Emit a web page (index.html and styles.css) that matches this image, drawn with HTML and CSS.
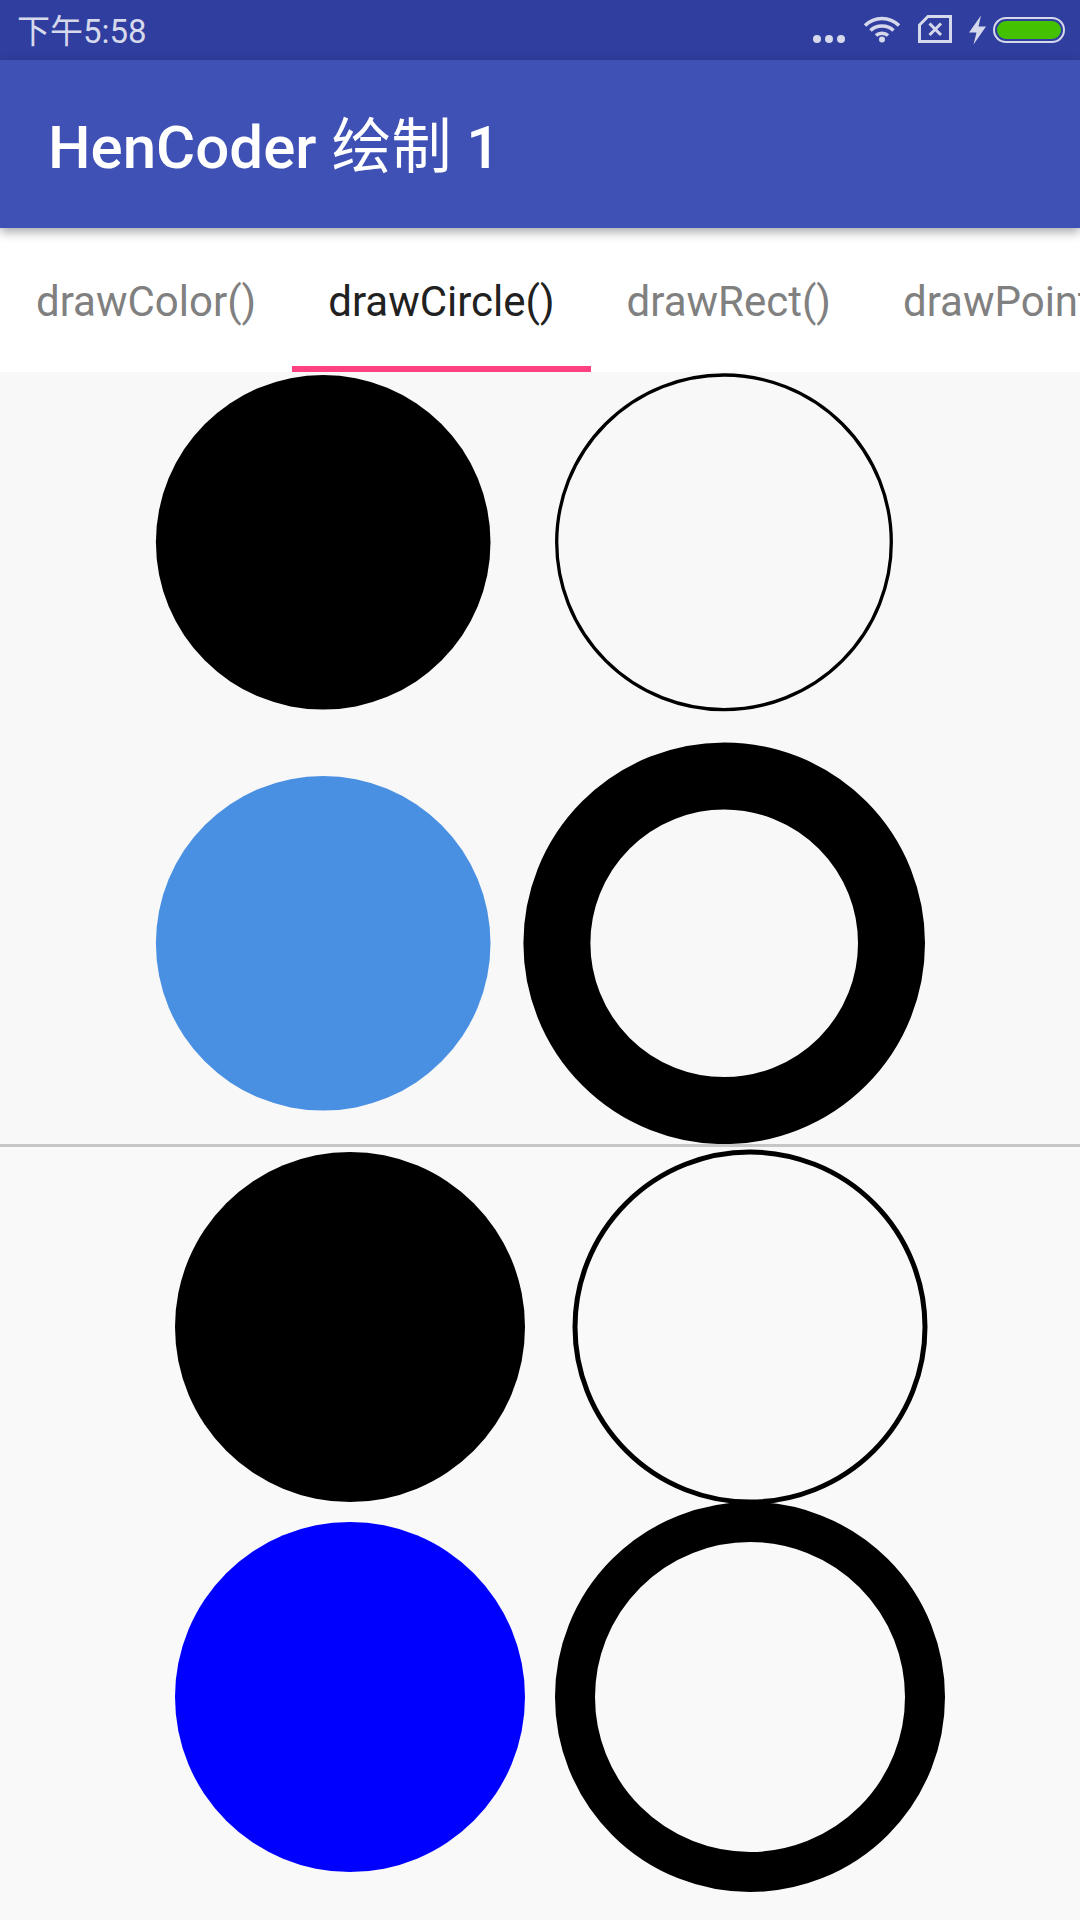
FILE: index.html
```html
<!DOCTYPE html>
<html>
<head>
<meta http-equiv="Content-Type" content="text/html; charset=utf-8"/>
<title>HenCoder 绘制 1</title>
<link rel="stylesheet" href="styles.css">
</head>
<body>

<div class="status-bar">
  <span class="status-time">下午5:58</span>
  <div class="status-icons">
    <svg class="icon-dots" width="32" height="8" viewBox="0 0 32 8">
      <circle cx="4" cy="4" r="4"/><circle cx="16" cy="4" r="4"/><circle cx="28" cy="4" r="4"/>
    </svg>
    <svg class="icon-wifi" width="38" height="28" viewBox="0 0 38 28">
      <path d="M2 10.500C11.500 1 26.500 1 36 10.500"/>
      <path d="M7.500 15.500C13.500 9.500 24.500 9.500 30.500 15.500"/>
      <path d="M13 20.500C16 17.500 22 17.500 25 20.500"/>
      <circle cx="19" cy="24.500" r="3"/>
    </svg>
    <svg class="icon-sim" width="34" height="28" viewBox="0 0 34 28">
      <path d="M10 1.500H32.500V26.500H1.500V10Z"/>
      <path d="M11.500 8.500L23 20M23 8.500L11.500 20"/>
    </svg>
    <svg class="icon-bolt" width="17" height="30" viewBox="0 0 17 30">
      <polygon points="12,0.500 0,17.500 7.500,17.500 4.500,29.500 17,11.500 9.500,11.500"/>
    </svg>
    <div class="battery"><div class="battery-level"></div></div>
  </div>
</div>

<div class="app-bar">
  <h1 class="app-title">HenCoder <span class="app-title-cjk">绘制</span> 1</h1>
</div>

<div class="tabs">
  <div class="tab">drawColor()</div>
  <div class="tab tab-active">drawCircle()</div>
  <div class="tab">drawRect()</div>
  <div class="tab">drawPoint()</div>
</div>

<svg class="canvas canvas-top" width="1080" height="772" viewBox="0 0 1080 772">
  <circle cx="323.200" cy="170.300" r="167.300" fill="#000"/>
  <circle cx="724" cy="170.300" r="167.300" fill="none" stroke="#000" stroke-width="3.300"/>
  <circle cx="323.200" cy="571.300" r="167.300" fill="#4a90e2"/>
  <circle cx="724.200" cy="571.300" r="167.300" fill="none" stroke="#000" stroke-width="67"/>
</svg>

<div class="divider"></div>

<svg class="canvas canvas-bottom" width="1080" height="773" viewBox="0 0 1080 773">
  <circle cx="350" cy="180" r="175" fill="#000"/>
  <circle cx="750" cy="180" r="175" fill="none" stroke="#000" stroke-width="5"/>
  <circle cx="350" cy="550" r="175" fill="#00f"/>
  <circle cx="750" cy="550" r="175" fill="none" stroke="#000" stroke-width="40"/>
</svg>

</body>
</html>
```

FILE: styles.css
```css
html, body {
  margin: 0;
  padding: 0;
}

body {
  width: 1080px;
  height: 1920px;
  overflow: hidden;
  background-color: #f9f9f9;
  font-family: Roboto, "Noto Sans CJK SC", sans-serif;
}

.status-bar {
  display: flex;
  justify-content: space-between;
  height: 60px;
  padding: 0 15px 0 17px;
  box-sizing: border-box;
  background-color: #303f9f;
  color: #d6d9ec;
}

.status-time {
  align-self: center;
  margin-bottom: 2px;
  font-size: 33px;
}

.status-icons {
  display: flex;
  align-items: flex-start;
}

.status-icons svg {
  display: block;
  fill: #d6d9ec;
}

.icon-dots {
  margin-top: 35px;
}

.icon-wifi {
  margin-left: 18px;
  margin-top: 15px;
}

.icon-wifi path {
  fill: none;
  stroke: #d6d9ec;
  stroke-width: 3.500;
}

.icon-sim {
  margin-left: 17px;
  margin-top: 15px;
}

.icon-sim path {
  fill: none;
  stroke: #d6d9ec;
  stroke-width: 3;
}

.icon-bolt {
  margin-left: 17px;
  margin-top: 15px;
}

.battery {
  width: 72px;
  height: 26px;
  margin-left: 7px;
  margin-top: 17px;
  padding: 2px;
  box-sizing: border-box;
  border: 2px solid #d6d9ec;
  border-radius: 13px;
}

.battery-level {
  height: 100%;
  border-radius: 9px;
  background-color: #44c100;
}

.app-bar {
  position: relative;
  z-index: 1;
  display: flex;
  align-items: center;
  height: 168px;
  padding: 0 0 6px 48px;
  box-sizing: border-box;
  background-color: #3f51b5;
  box-shadow: 0 4px 10px rgba(0, 0, 0, 0.35);
}

.app-title {
  margin: 0;
  font-size: 60px;
  font-weight: 500;
  color: #fff;
}

.app-title-cjk {
  font-weight: 400;
}

.tabs {
  display: flex;
  height: 144px;
  overflow: hidden;
  background-color: #fff;
}

.tab {
  display: flex;
  align-items: center;
  flex: none;
  box-sizing: border-box;
  padding: 8px 36px 0;
  border-bottom: 6px solid transparent;
  font-size: 42px;
  color: #808080;
}

.tab-active {
  border-bottom-color: #ff4081;
  color: #212121;
}

.canvas {
  display: block;
}

.canvas-top {
  background-color: #f8f8f8;
}

.canvas-bottom {
  background-color: #f9f9f9;
}

.divider {
  height: 3px;
  background-color: #c6c6c6;
}
```
